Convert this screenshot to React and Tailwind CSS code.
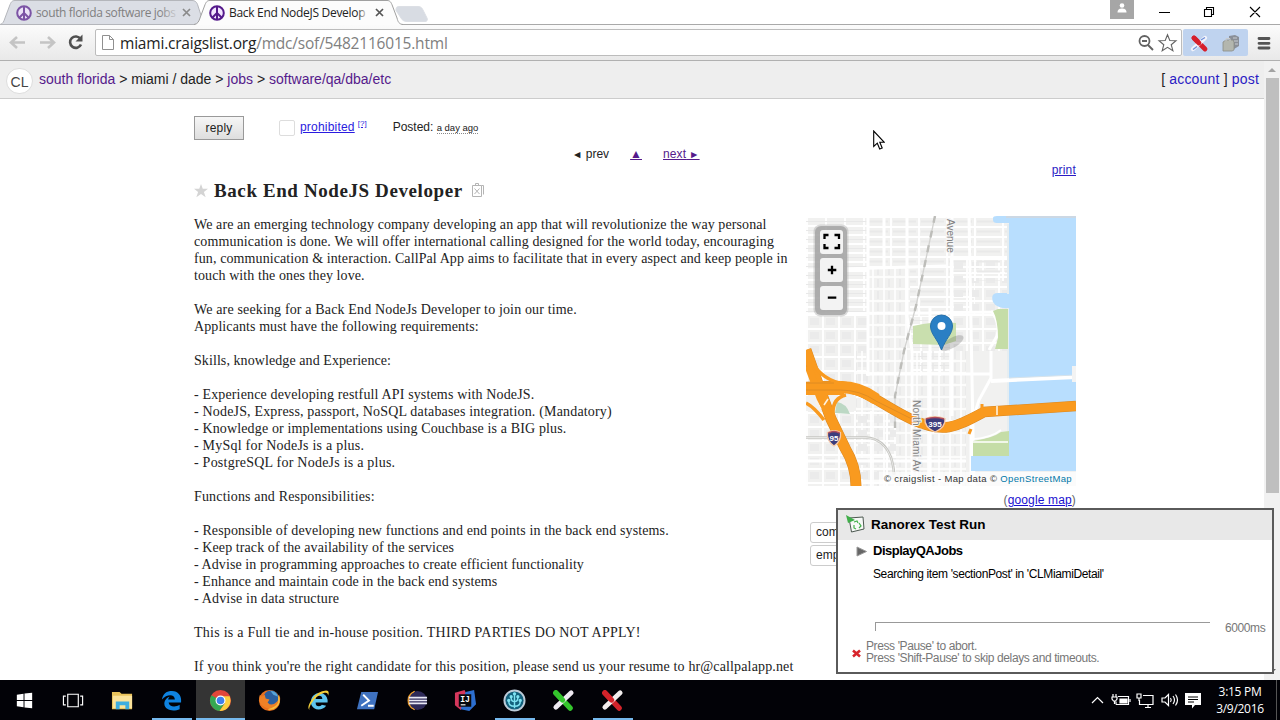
import React from "react";

const SANS = "font-['Liberation_Sans',Arial,sans-serif]";
const UI = "font-['Open_Sans','Noto_Sans',sans-serif]";

const posting = [
  ["We are an emerging technology company developing an app that will revolutionize the way personal", "tracking-[0.09px]"],
  ["communication is done. We will offer international calling designed for the world today, encouraging", "tracking-[0.13px]"],
  ["fun, communication & interaction. CallPal App aims to facilitate that in every aspect and keep people in", "tracking-[0.1px]"],
  ["touch with the ones they love.", "tracking-[0.09px]"],
  ["", ""],
  ["We are seeking for a Back End NodeJs Developer to join our time.", "tracking-[0.15px]"],
  ["Applicants must have the following requirements:", "tracking-[0.09px]"],
  ["", ""],
  ["Skills, knowledge and Experience:", "tracking-[0.08px]"],
  ["", ""],
  ["- Experience developing restfull API systems with NodeJS.", "tracking-[0.145px]"],
  ["- NodeJS, Express, passport, NoSQL databases integration. (Mandatory)", "tracking-[0.175px]"],
  ["- Knowledge or implementations using Couchbase is a BIG plus.", "tracking-[0.14px]"],
  ["- MySql for NodeJs is a plus.", "tracking-[0.22px]"],
  ["- PostgreSQL for NodeJs is a plus.", "tracking-[0.23px]"],
  ["", ""],
  ["Functions and Responsibilities:", "tracking-[0.16px]"],
  ["", ""],
  ["- Responsible of developing new functions and end points in the back end systems.", "tracking-[0.12px]"],
  ["- Keep track of the availability of the services", "tracking-[0.09px]"],
  ["- Advise in programming approaches to create efficient functionality", "tracking-[0.09px]"],
  ["- Enhance and maintain code in the back end systems", "tracking-[0.085px]"],
  ["- Advise in data structure", "tracking-[0.17px]"],
  ["", ""],
  ["This is a Full tie and in-house position. THIRD PARTIES DO NOT APPLY!", "tracking-[0.26px]"],
  ["", ""],
  ["If you think you're the right candidate for this position, please send us your resume to hr@callpalapp.net", "tracking-[0.14px]"],
];

function Peace({ className }) {
  return (
    <svg viewBox="0 0 16 16" className={className} fill="none" stroke="#551a8b" strokeWidth="2">
      <circle cx="8" cy="8" r="6.8" fill="#f3e6ff" />
      <path d="M8 1v14M8 8l-4.8 4.8M8 8l4.8 4.8" />
    </svg>
  );
}

function CloseX({ className }) {
  return (
    <svg viewBox="0 0 9 9" className={`h-[9px] w-[9px] shrink-0 ${className}`} strokeWidth="1.700">
      <path d="M1 1l7 7M8 1l-7 7" />
    </svg>
  );
}

function TabStrip() {
  return (
    <div className="relative flex h-[25px] shrink-0 bg-white">
      <svg className="absolute left-0 top-0 h-[25px] w-full" viewBox="0 0 1280 25">
        <path d="M0 24.5H1280" stroke="#a9a9a9" />
        <path d="M0 24.5C3 24 4 21 5 18L9.500 6C11 2 12 .5 15 .5H192C195 .5 197 2 198 6L204 24.500Z" fill="#dbdee5" stroke="#b4b6bb" />
        <path d="M396 10.500C396 7 397 6.500 400 6.500H418C421 6.500 422 8 423 10L427 18C428 20 427 21.500 425 21.500H407C404 21.500 402 20 401 18Z" fill="#d8dce3" stroke="#dcdfe5" />
        <path d="M194 25C198 24 199 21 200 18L204.500 6C206 2 207 .5 210 .5H387C390 .5 391 2 392.500 6L397 18C398 22 399 24 403 25Z" fill="#fcfcfc" />
        <path d="M194 24.500C198 24 199 21 200 18L204.500 6C206 2 207 .5 210 .5H387C390 .5 391 2 392.500 6L397 18C398 22 399 24 403 24.500" fill="none" stroke="#a0a0a0" />
      </svg>
      <div className="relative flex h-[25px] w-[200px] items-center pl-4">
        <Peace className="h-4 w-4 shrink-0 opacity-70" />
        <div className={`${UI} ml-1 w-[144px] whitespace-nowrap text-[12px] leading-[18px] tracking-[-0.37px] text-[#808080]`}>
          south florida software jobs
        </div>
        <div className="-ml-5 mr-[2px] h-4 w-5 shrink-0 bg-linear-to-r from-transparent to-[#dbdee5]" />
        <CloseX className="stroke-[#8a8a8a]" />
      </div>
      <div className="relative flex h-[25px] w-[200px] items-center pl-[9px]">
        <Peace className="h-4 w-4 shrink-0" />
        <div className={`${UI} ml-1 w-[140px] whitespace-nowrap text-[12px] leading-[18px] tracking-[-0.3px] text-[#222]`}>
          Back End NodeJS Develop
        </div>
        <div className="-ml-3 mr-[6px] h-4 w-3 shrink-0 bg-linear-to-r from-transparent to-[#fcfcfc]" />
        <CloseX className="stroke-[#555]" />
      </div>
      <div className="relative ml-auto flex h-[25px] items-start">
        <div className="mr-[25px] flex h-[19px] w-6 justify-center bg-[#a6a6a6] pt-[3px]">
          <svg viewBox="0 0 10 10" className="h-[10px] w-[10px]" fill="#fff"><circle cx="5" cy="2.500" r="2.300" /><path d="M.5 9.500C.5 6 3 5.500 5 5.500S9.500 6 9.500 9.500Z" /></svg>
        </div>
        <svg viewBox="0 0 121 25" className="h-[25px] w-[121px]" fill="none" stroke="#000" strokeWidth="1.100">
          <path d="M0 12.500h11M45.500 9.500h7v7h-7zM47.500 9.500v-2h7v7h-2M91 7l10 10M101 7L91 17" />
        </svg>
      </div>
    </div>
  );
}

function Toolbar() {
  return (
    <div className="flex h-9 shrink-0 items-center border-b border-[#b0b0b0] bg-linear-to-b from-[#fbfbfb] to-[#e9e9e9]">
      <svg viewBox="0 0 95 35" className="h-[35px] w-[95px] shrink-0" fill="none">
        <path d="M25 17.500H12M17 12l-6 5.500 6 5.500" stroke="#c4c4c4" strokeWidth="2.600" />
        <path d="M40 17.500H53M48 12l6 5.500-6 5.500" stroke="#c4c4c4" strokeWidth="2.600" />
        <path d="M80.500 14A5.700 5.700 0 1 0 81 19.500" stroke="#505050" strokeWidth="2.600" />
        <path d="M82.500 9.500v7h-7z" fill="#505050" />
      </svg>
      <div className="flex h-[27px] w-[1087px] shrink-0 items-center rounded-[2px] border border-[#bcbcbc] bg-white">
        <svg viewBox="0 0 12 15" className="ml-[6px] h-[15px] w-3" fill="#fff" stroke="#909090"><path d="M.5.5h7l4 4v10H.5zM7.500.5v4h4" /></svg>
        <div className={`${UI} ml-[6px] whitespace-nowrap text-[15.500px] leading-[22px] tracking-[-0.2px] text-[#808080]`}>
          <span className="text-[#222]">miami.craigslist.org</span>/mdc/sof/5482116015.html
        </div>
        <svg viewBox="0 0 42 20" className="ml-auto mr-px h-5 w-[42px]" fill="none" stroke="#636363">
          <circle cx="6.500" cy="8" r="5" strokeWidth="1.800" /><path d="M4 8h5M10 12l5 5" strokeWidth="1.900" />
          <path d="M29.500 1.800l2.300 5.700 6.200.3-4.800 3.900 1.700 6-5.400-3.400-5.300 3.400 1.600-6-4.800-3.900 6.200-.3z" strokeWidth="1.100" />
        </svg>
      </div>
      <div className="ml-px flex h-[27px] w-[65px] items-center rounded-[2px] bg-[#bfd3ef]">
        <svg viewBox="0 0 64 26" className="h-[26px] w-[64px]">
          <path d="M11 8l11 11" stroke="#d61f2b" strokeWidth="4.800" strokeLinecap="round" />
          <path d="M22 8L10 19" stroke="#f2f3fb" strokeWidth="4.400" strokeLinecap="round" />
          <path d="M18 10l4-2.500M10 19.500l4-3" stroke="#6f8fd8" strokeWidth="1.300" />
          <path d="M11 8l5 5" stroke="#d61f2b" strokeWidth="4.800" strokeLinecap="round" />
          <path d="M46 6l6-1 4 2v9l-5 3-5-3z" fill="#8a8f98" /><path d="M40 12l3-2h7l1 2v8l-2 1h-9z" fill="#b3b6ae" stroke="#8b8d86" strokeWidth=".8" />
          <path d="M43 11V8.500h4V11M50 8h4M51 11h4M52 14h3" fill="none" stroke="#c9ccd0" />
        </svg>
      </div>
      <svg viewBox="0 0 14 14" className="ml-[9px] h-[14px] w-[14px]" stroke="#555" strokeWidth="2.800" strokeLinecap="round"><path d="M2 2.500h10M2 7.300h10M2 12h10" /></svg>
    </div>
  );
}

function PageHeader() {
  return (
    <div className={`${SANS} flex h-[38px] shrink-0 items-center border-b border-[#ccc] bg-[#eee] pl-[6px] pr-[5px] text-[14px] text-[#222]`}>
      <div className="mt-[3px] flex h-[26px] w-[27px] items-center justify-center rounded-full border border-[#ddd] bg-white pt-0.5 text-[14px] text-[#444]">CL</div>
      <div className="ml-[6px] whitespace-pre">
        <span className="text-[#551a8b]">south florida</span> &gt; miami / dade &gt; <span className="text-[#551a8b]">jobs</span> &gt; <span className="text-[#551a8b]">software/qa/dba/etc</span>
      </div>
      <div className="ml-auto whitespace-pre tracking-[0.18px]">
        [ <span className="text-[#2a1bc4]">account</span> ] <span className="text-[#2a1bc4]">post</span>
      </div>
    </div>
  );
}

function Shield({ x, y, w, label }) {
  return (
    <g transform={`translate(${x} ${y})`}>
      <path d={`M${-w / 2} -5.500Q0 -9 ${w / 2} -5.500Q${w / 2 + 1} 3 0 8Q${-w / 2 - 1} 3 ${-w / 2} -5.500Z`} fill="#3b3c7c" stroke="#f6c9a8" strokeWidth="1.300" />
      <path d={`M${-w / 2 + 1} -5Q0 -8 ${w / 2 - 1} -5`} stroke="#b04a5a" strokeWidth="1.500" fill="none" />
      <text y="3" textAnchor="middle" fontSize="8" fontWeight="bold" fill="#fff" fontFamily="Liberation Sans">{label}</text>
    </g>
  );
}

const I395 = "M0 171L25 170C55 168 76 190 107 204S150 211 178 196L270 190";
const I95 = "M0 134L11 165L25 203L39 232Q50 250 50 270";

function MapView() {
  return (
    <svg viewBox="0 0 270 270" className="block h-[270px] w-[270px]">
      <defs>
        <pattern id="gA" width="19" height="9" patternUnits="userSpaceOnUse"><path d="M0 1H19M1 0V9" stroke="#fff" strokeWidth="1.800" /><path d="M0 5.500H19" stroke="#e8e8e8" strokeWidth="1" /></pattern>
        <pattern id="gB" width="11" height="12" patternUnits="userSpaceOnUse"><path d="M0 1H11M1 0V12" stroke="#fff" strokeWidth="1.600" /><path d="M6 3V11" stroke="#e8e8e8" strokeWidth="1.500" /></pattern>
        <pattern id="gC" width="16" height="14" patternUnits="userSpaceOnUse"><path d="M0 1H16M1 0V14" stroke="#fff" strokeWidth="1.900" /><path d="M4 4h9v7H4z" fill="#ebebeb" /></pattern>
        <pattern id="gD" width="28" height="10" patternUnits="userSpaceOnUse"><path d="M0 1H28M1 0V10" stroke="#fff" strokeWidth="1.800" /><path d="M3 5.500H26" stroke="#e9e9e9" strokeWidth="2" /></pattern>
      </defs>
      <rect width="270" height="270" fill="#f1f1f0" />
      <rect width="62" height="100" fill="url(#gA)" />
      <rect x="62" width="42" height="52" fill="url(#gD)" />
      <rect x="62" y="52" width="42" height="83" fill="url(#gB)" />
      <rect y="100" width="62" height="80" fill="url(#gC)" />
      <rect x="104" width="65" height="100" fill="url(#gD)" />
      <rect x="104" y="100" width="40" height="60" fill="url(#gA)" />
      <rect x="144" y="40" width="60" height="95" fill="url(#gC)" />
      <rect x="165" width="38" height="65" fill="url(#gD)" />
      <rect x="50" y="135" width="110" height="135" fill="url(#gB)" />
      <rect y="195" width="90" height="75" fill="url(#gC)" />
      <g stroke="#fff" fill="none" strokeWidth="3">
        <path d="M101 0V100L106 135V270M62 0V160M163 0L168 270M146 0V200M0 54L140 50M0 98L200 96M60 158H185M0 245H160M124 90V270M78 0V52" />
        <path d="M185 95q10 12 6 25l-8 14M185 135v27l-12 22-8 25v60" />
      </g>
      <path d="M203 2h67v253h-105v-15h38z" fill="#b8defe" />
      <path d="M187 2q0-2 4-2h12v7h-12q-4 0-4-3zM203 77h-11q-8 0-5 9q4 7 16 6z" fill="#b8defe" />
      <path d="M200 0h70v2h-70z" fill="#ccd8e4" />
      <path d="M201 8h2v70h-2zM201 92h2v123h-2z" fill="#e6edf0" />
      <path d="M107 110l10-2q16-3 33-1v18l-12 4-31-1z" fill="#c9dfae" />
      <path d="M192 93h10v40h-13l3-11q0-18-5-27z" fill="#c5dda7" />
      <path d="M167 225q20-3 28-9l8-1v25h-36z" fill="#c5dda7" /><path d="M167 223q18-1 28-9M167 226h35" stroke="#fff" strokeWidth="1.700" fill="none" />
      <path d="M29 197l2-11q9 1 13 12z" fill="#bcd8c4" />
      <path d="M185 165l85-4" stroke="#fff" strokeWidth="4" /><path d="M203 162l67-3" stroke="#d6e2ea" strokeWidth="1" /><path d="M266 150h4v16h-4z" fill="#f3f3f3" />
      <path d="M129 0L110 90L98 135L89 180V212" fill="none" stroke="#d2d2d0" strokeWidth="1.300" /><path d="M129 0L110 90L98 135L89 180V212" fill="none" stroke="#bdbdb9" strokeWidth="2.400" strokeDasharray="7 8" />
      <path d="M0 221.500H60q18 1 25 20q3 10 3 17" fill="none" stroke="#c6c6c2" strokeWidth="2.600" /><path d="M0 221.500H60q18 1 25 20q3 10 3 17" fill="none" stroke="#e6e6e4" strokeWidth="1" />
      <g fill="none" stroke="#d98823">
        <path d={I395} strokeWidth="10.500" />
        <path d={I95} strokeWidth="11" />
      </g>
      <g fill="none" stroke="#f99a1f">
        <path d={I395} strokeWidth="9.500" />
        <path d={I95} strokeWidth="10" />
        <path d="M2 150L14 182L26 205" strokeWidth="7" />
        <path d="M6 146q10 18 32 22M0 187q8 4 18 17M40 179q-14 3-13 20" strokeWidth="3.600" />
        <path d="M176 188v12M165 213l-2 5" strokeWidth="3" />
        <path d="M0 173h38" strokeWidth="12" /><path d="M34 171q20 0 36 12" strokeWidth="12" />
      </g>
      <path d="M0 174h34q20 0 36 11l36 18M0 167h28" fill="none" stroke="#d88924" strokeWidth=".8" />
      <path d="M10 186l5 7M22 183l-4 6M191 190v9" stroke="#fff3df" strokeWidth="1.600" />
      <g fontFamily="Liberation Sans" fill="#808080" fontSize="10" stroke="#f4f4f4" strokeWidth="2" paintOrder="stroke">
        <text transform="translate(141 3) rotate(90)">Avenue</text>
        <text transform="translate(107 184) rotate(90)" letterSpacing=".3">North Miami Av</text>
      </g>
      <Shield x={28} y={222} w={13} label="95" />
      <Shield x={129} y={208} w={20} label="395" />
      <ellipse cx="146" cy="127" rx="13" ry="5" transform="rotate(-30 146 127)" fill="#555" opacity=".25" />
      <path d="M135.500 134C131 122 124.500 118 124.500 110a11 11 0 0 1 22 0C146.500 118 140 122 135.500 134Z" fill="#2a7fc4" stroke="#2670ab" />
      <circle cx="135.500" cy="110" r="4" fill="#fff" />
      <rect x="7.500" y="8.500" width="35" height="92" rx="7" fill="#999" opacity=".35" />
      <rect x="9" y="10" width="32" height="89" rx="6" fill="#a6a6a6" opacity=".85" />
      <g fill="#f3f3f3">
        <rect x="14" y="14" width="23" height="24" rx="3" /><rect x="14" y="42" width="23" height="24" rx="3" /><rect x="14" y="70" width="23" height="24" rx="3" />
      </g>
      <path d="M18.500 23v-4h4M28.500 19h4.500v4M33 28v4h-4.500M22.500 32h-4v-4M21.800 54h8.500M26 49.800v8.500M21.800 81.700h8.500" fill="none" stroke="#000" strokeWidth="2.300" />
    </svg>
  );
}

function Scrollbar() {
  return (
    <div className="flex w-4 shrink-0 flex-col items-center bg-[#f1f1f1]">
      <svg viewBox="0 0 16 17" className="h-[17px] w-4 shrink-0"><path d="M4 11l4-4 4 4z" fill="#a3a3a3" /></svg>
      <div className="h-[415px] w-[13px] bg-[#bfbfbf]" />
      <svg viewBox="0 0 16 17" className="mt-auto h-[17px] w-4 shrink-0"><path d="M4 6l4 4 4-4z" fill="#606060" /></svg>
    </div>
  );
}

function RanorexDialog() {
  return (
    <div className={`${SANS} absolute left-[836px] top-[508px] flex h-[166px] w-[438px] flex-col border-2 border-[#5a5a5a] bg-white`}>
      <div className="flex h-[30px] shrink-0 items-center bg-[#e8e8e8] pl-2">
        <svg viewBox="0 0 20 20" className="mb-[3px] h-5 w-5">
          <path d="M3 4l14-1 1 12L5.500 18z" fill="#f7f9f7" stroke="#4c5850" />
          <path d="M0 1l9 5-7 3z" fill="#3fae49" /><path d="M8 8l3-1 1 2M13 9l2 3-2 2M10 15l-2-1 0-3" stroke="#43b04b" strokeWidth="1.200" fill="none" />
        </svg>
        <div className="ml-[5px] whitespace-nowrap text-[13.500px] font-bold text-black">Ranorex Test Run</div>
      </div>
      <div className="flex h-[22px] shrink-0 items-center pl-[18px]">
        <svg viewBox="0 0 11 11" className="h-[11px] w-[11px]"><path d="M1 1l9.500 4.500L1 10z" fill="#666" stroke="#999" /></svg>
        <div className="ml-[6px] whitespace-nowrap text-[13px] font-bold tracking-[-0.5px] text-black">DisplayQAJobs</div>
      </div>
      <div className="h-[60px] shrink-0 whitespace-nowrap pl-[35px] pt-[4px] text-[12px] leading-4 tracking-[-0.38px] text-black">Searching item 'sectionPost' in 'CLMiamiDetail'</div>
      <div className="flex h-[18px] shrink-0 pl-[37px]">
        <div className="h-[9px] w-[335px] border-l border-t border-[#999]" />
        <div className="ml-[15px] whitespace-nowrap text-[12px] leading-[12px] tracking-[-0.4px] text-[#777]">6000ms</div>
      </div>
      <div className="flex shrink-0 items-center pl-[14px]">
        <svg viewBox="0 0 9 9" className="mt-[3px] h-[9px] w-[9px]" stroke="#d8242b" strokeWidth="2.600"><path d="M1 1.500l7 6M8 1.500l-7 6" /></svg>
        <div className="ml-[5px] whitespace-nowrap text-[12px] leading-[12px] tracking-[-0.39px] text-[#777]">
          <div>Press 'Pause' to abort.</div>
          <div>Press 'Shift-Pause' to skip delays and timeouts.</div>
        </div>
      </div>
    </div>
  );
}

function Posting() {
  return (
    <div className={`${SANS} relative flex grow flex-col overflow-hidden bg-white pl-[194px] text-[12px] text-[#222]`}>
      <div className="flex h-[41px] items-start pt-[17px]">
        <div className="flex h-6 w-[50px] shrink-0 items-center justify-center border border-[#999] bg-linear-to-b from-[#f6f6f6] to-[#dedede] tracking-[0.15px]">reply</div>
        <div className="ml-[35px] mt-1 h-4 w-4 rounded-[2px] border border-[#ddd] bg-white" />
        <div className="ml-[5px] flex leading-[22px]">
          <span className="tracking-[0.2px] text-[#2a1be0] underline">prohibited</span>
          <span className="ml-[3px] h-4 text-[8px] leading-4 text-[#2a1be0] underline">[?]</span>
        </div>
        <div className="ml-[26px] leading-[22px]">Posted: <span className="border-b border-dotted border-[#888] text-[9.500px]">a day ago</span></div>
      </div>
      <div className="flex h-[28px] items-center pl-[378px]">
        <span><span className="text-[10.500px]">◄</span> prev</span>
        <span className="ml-[21px] text-[#551a8b] underline">▲</span>
        <span className="ml-[21px] tracking-[0.1px] text-[#551a8b] underline">next<span className="text-[10.500px]"> ►</span></span>
      </div>
      <div className="-mt-2 flex h-5 w-[882px] items-center justify-end text-[#2a1bc4]"><span className="tracking-[0.2px] underline">print</span></div>
      <div className="flex h-9 items-start pt-px">
        <svg viewBox="0 0 24 24" className="mt-[2px] h-[15px] w-[14px]"><path d="M12 1l3 8h9l-7 5.500 3 9-8-5.500-8 5.500 3-9L0 9h9z" fill="#d4d4d4" /></svg>
        <div className="ml-[6px] whitespace-nowrap font-['Liberation_Serif','Times_New_Roman',serif] text-[19px] font-bold leading-[20px] tracking-[0.6px]">Back End NodeJS Developer</div>
        <svg viewBox="0 0 14 14" className="ml-2 mt-[2px] h-[14px] w-[14px]" fill="none" stroke="#b4b4b4"><path d="M1.500 2.500h9v11h-9zM4.500 2.500v-2h3v2M10.500 2.500h2v9M3.500 5.500l5 5.500M8.500 5.500l-5 5.500" /></svg>
      </div>
      <div className="flex h-[464px] w-[882px] shrink-0">
        <div className="w-[612px] shrink-0 font-['Liberation_Serif','Times_New_Roman',serif] text-[14px] leading-[17px]">
          {posting.map(([text, track], i) => (
            <div key={i} className={`h-[17px] whitespace-nowrap ${track}`}>{text}</div>
          ))}
        </div>
        <div className="flex w-[270px] flex-col">
          <div className="relative h-[270px]">
            <MapView />
            <div className="absolute bottom-0 right-0 whitespace-nowrap bg-white/70 pl-[5px] pr-1 text-[9.500px] leading-[14px] tracking-[0.36px] text-[#333]">
              © craigslist - Map data © <span className="text-[#0078a8]">OpenStreetMap</span>
            </div>
          </div>
          <div className="flex h-[36px] items-start justify-end pt-[5px] tracking-[0.15px]"><span className="text-[#666]">(</span><span className="text-[#1a10d0] underline">google map</span><span className="text-[#666]">)</span></div>
          <div className="ml-1 flex w-[180px] flex-col gap-[2px]">
            <div className="h-[21px] rounded-[3px] border border-[#ccc] pl-[5px] leading-[19px]">com</div>
            <div className="h-[21px] rounded-[3px] border border-[#ccc] pl-[5px] leading-[19px]">emp</div>
          </div>
        </div>
      </div>
    </div>
  );
}

function TaskItem({ open, active, children }) {
  return (
    <div className={`relative flex h-10 w-[49px] shrink-0 items-center justify-center ${active ? "bg-[#343434]" : ""}`}>
      <svg viewBox="0 0 24 24" className="h-[23px] w-[23px]">{children}</svg>
      {open && <div className={`absolute bottom-0 h-[2px] bg-[#76b9ed] ${active ? "w-[49px]" : "w-10"}`} />}
    </div>
  );
}

function Taskbar() {
  return (
    <div className="flex h-10 shrink-0 bg-[#020207]">
      <TaskItem><path d="M4 6l7-1v6.500H4zM12 4.800L20 3.800v7.700h-8zM4 12.500h7V19l-7-1zM12 12.500h8v7.700l-8-1z" fill="#fff" /></TaskItem>
      <TaskItem><path d="M6 5.500h11v13H6zM4 7.500H1.500v9H4M19 7.500h2.500v9H19" fill="none" stroke="#fff" strokeWidth="1.200" /></TaskItem>
      <TaskItem><path d="M1 3h8l2 2h11v16H1z" fill="#e9c35b" /><path d="M2 7h20v13H2z" fill="#fbe39b" /><path d="M5 21v-8h14v8h-4v-4H9v4z" fill="#3eaee0" /></TaskItem>
      <TaskItem open><path d="M2 11C3 4.500 7 2 12.500 2 19 2 22 7 22 11v3H9c.5 5 7.500 5 11.500 2.500V21C15 23.500 5 23 4.500 15.500 4.500 11 8 8.500 10 8c-1 1-1.500 2-1.500 3h7C15.500 5 7 5 2 11z" fill="#0f83e0" /></TaskItem>
      <TaskItem active open>
        <circle cx="12" cy="12" r="11" fill="#e2473a" /><path d="M12 12L2.500 6.500A11 11 0 0 0 11 23l5.500-8.500z" fill="#36a852" /><path d="M12 12l4.800 2.500L11 23A11 11 0 0 0 21.500 7.500H12z" fill="#fcd03f" />
        <circle cx="12" cy="12" r="5.200" fill="#fff" /><circle cx="12" cy="12" r="4" fill="#3f80ee" />
      </TaskItem>
      <TaskItem>
        <circle cx="12" cy="12" r="11" fill="#e8701d" /><circle cx="13.500" cy="9.500" r="8" fill="#2c5f9e" /><path d="M13 2q6 0 8 6l-5-2z" fill="#59a5d8" />
        <path d="M2 6l2 2 3-2 1 4 4 1-2 3q4 5 10-1 3-4 2-8 3 8-2 13t-13 1T2 6z" fill="#ef8126" /><path d="M21 6q4 8-2 13-4 4-9 2 9-2 11-7z" fill="#f8c13c" />
      </TaskItem>
      <TaskItem>
        <path d="M20 17.500q-3 4-8 4t-7.500-5Q3 10 7 6.500t10-1.500q5 3 4.500 9H9q0 4 3.500 4 2.500 0 3-1.500zM9 10.500h7q0-3.500-3.500-3.500T9 10.500z" fill="#5dc4ee" />
        <path d="M3 22Q-1 20 5 11T20 1.500q4 0 2 5.500 0-4-4-3Q9 7 4 16q-3 6-1 6z" fill="#f2cf3a" />
      </TaskItem>
      <TaskItem><path d="M5.500 3H23l-4 18H1z" fill="#3f72c0" /><path d="M7.500 6l6 6-8 5.500M12.500 17.500h6" stroke="#fff" strokeWidth="2" fill="none" /></TaskItem>
      <TaskItem><circle cx="13" cy="12" r="10" fill="#2e2a58" /><path d="M10 2.500A10 10 0 0 0 10 21.500 10.500 10.500 0 0 1 10 2.500z" fill="#f0a02c" stroke="#f0a02c" /><path d="M4 9h19M4 12h19M4 15h19" stroke="#e9e9f5" strokeWidth="1.600" /></TaskItem>
      <TaskItem><path d="M1 4l10-3 4 8L7 22l-6-5z" fill="#d5375c" /><path d="M12 3l9-2 2 15-7 7-9-2z" fill="#2d6fd0" /><rect x="5" y="5.500" width="13" height="13" fill="#08080c" /><text x="6.500" y="13.500" fontSize="8.500" fontWeight="bold" fill="#fff" fontFamily="Liberation Mono">IJ</text><path d="M7 16.500h5" stroke="#fff" strokeWidth="1.200" /></TaskItem>
      <TaskItem open><circle cx="12" cy="12" r="11.500" fill="#bccbd8" /><circle cx="12" cy="12" r="9.500" fill="#12607c" /><path d="M12 4v16M12 18c-4 0-6-2-6-5M12 18c4 0 6-2 6-5M12 13c-3 0-3.500-2-3.500-4M12 13c3 0 3.500-2 3.500-4" stroke="#7fe2f2" strokeWidth="1.500" fill="none" /><g fill="#7fe2f2"><circle cx="6" cy="12" r="1.700" /><circle cx="18" cy="12" r="1.700" /><circle cx="8.500" cy="8" r="1.700" /><circle cx="15.500" cy="8" r="1.700" /><circle cx="12" cy="5" r="1.700" /></g></TaskItem>
      <TaskItem><path d="M4 4l15 16" stroke="#34c52c" strokeWidth="5.500" strokeLinecap="round" /><path d="M20 4L4 19" stroke="#efeaf2" strokeWidth="5" strokeLinecap="round" /><path d="M4 4l7 7.500" stroke="#34c52c" strokeWidth="5.500" strokeLinecap="round" /></TaskItem>
      <TaskItem open><path d="M4 4l15 16" stroke="#d3232a" strokeWidth="5.500" strokeLinecap="round" /><path d="M20 4L4 19" stroke="#f3eeee" strokeWidth="5" strokeLinecap="round" /><path d="M4 4l7 7.500" stroke="#d3232a" strokeWidth="5.500" strokeLinecap="round" /></TaskItem>
      <div className="ml-auto flex items-center pr-[3px]">
        <svg viewBox="0 0 112 20" className="h-5 w-[112px]" fill="none" stroke="#fff" strokeWidth="1.200">
          <path d="M3 13l5.500-5.500L14 13" />
          <path d="M29 6.500h10.500v8H27M27 14.500v-3" /><path d="M31 9h7v4h-7z" fill="#fff" /><path d="M41 9v3M24 4v3M27 4v3M23 7h5v2l-1.500 2h-2L23 9zM25.500 11v3" />
          <path d="M54 5.500h10v9H50.500V10M56 17.500h6M59 14.500v3M48 4h4v4h-4zM50 8v3" />
          <path d="M73 8v4h3l3.500 3.500v-11L76 8zM81.500 8q1.500 2 0 4M84 6q3 4 0 8M86.500 4.500q4 5.500 0 11" />
          <path d="M96 3h16v12h-6l-3 3.500V15h-7z" fill="#fff" stroke="none" /><path d="M99 7h10M99 9.500h10M99 12h6" stroke="#000" strokeWidth="1" />
        </svg>
        <div className={`${UI} ml-2 w-[62px] whitespace-nowrap text-center text-[12px] leading-[17px] tracking-[-0.3px] text-white`}>
          <div>3:15 PM</div><div>3/9/2016</div>
        </div>
        <div className="ml-[5px] h-10 w-px bg-[#555]" />
      </div>
    </div>
  );
}

export default function App() {
  return (
    <div className="relative flex h-[720px] w-[1280px] flex-col overflow-hidden bg-white">
      <TabStrip />
      <Toolbar />
      <div className="flex h-[619px] shrink-0">
        <div className="flex w-[1264px] shrink-0 flex-col">
          <PageHeader />
          <Posting />
        </div>
        <Scrollbar />
      </div>
      <Taskbar />
      <RanorexDialog />
      <svg viewBox="0 0 12 20" className="absolute left-[873px] top-[130px] h-5 w-3"><path d="M.7 1v15.500l3.600-3.300 2.400 5.800 2.500-1-2.400-5.700h4.500z" fill="#fff" stroke="#000" strokeWidth="1.100" /></svg>
    </div>
  );
}
